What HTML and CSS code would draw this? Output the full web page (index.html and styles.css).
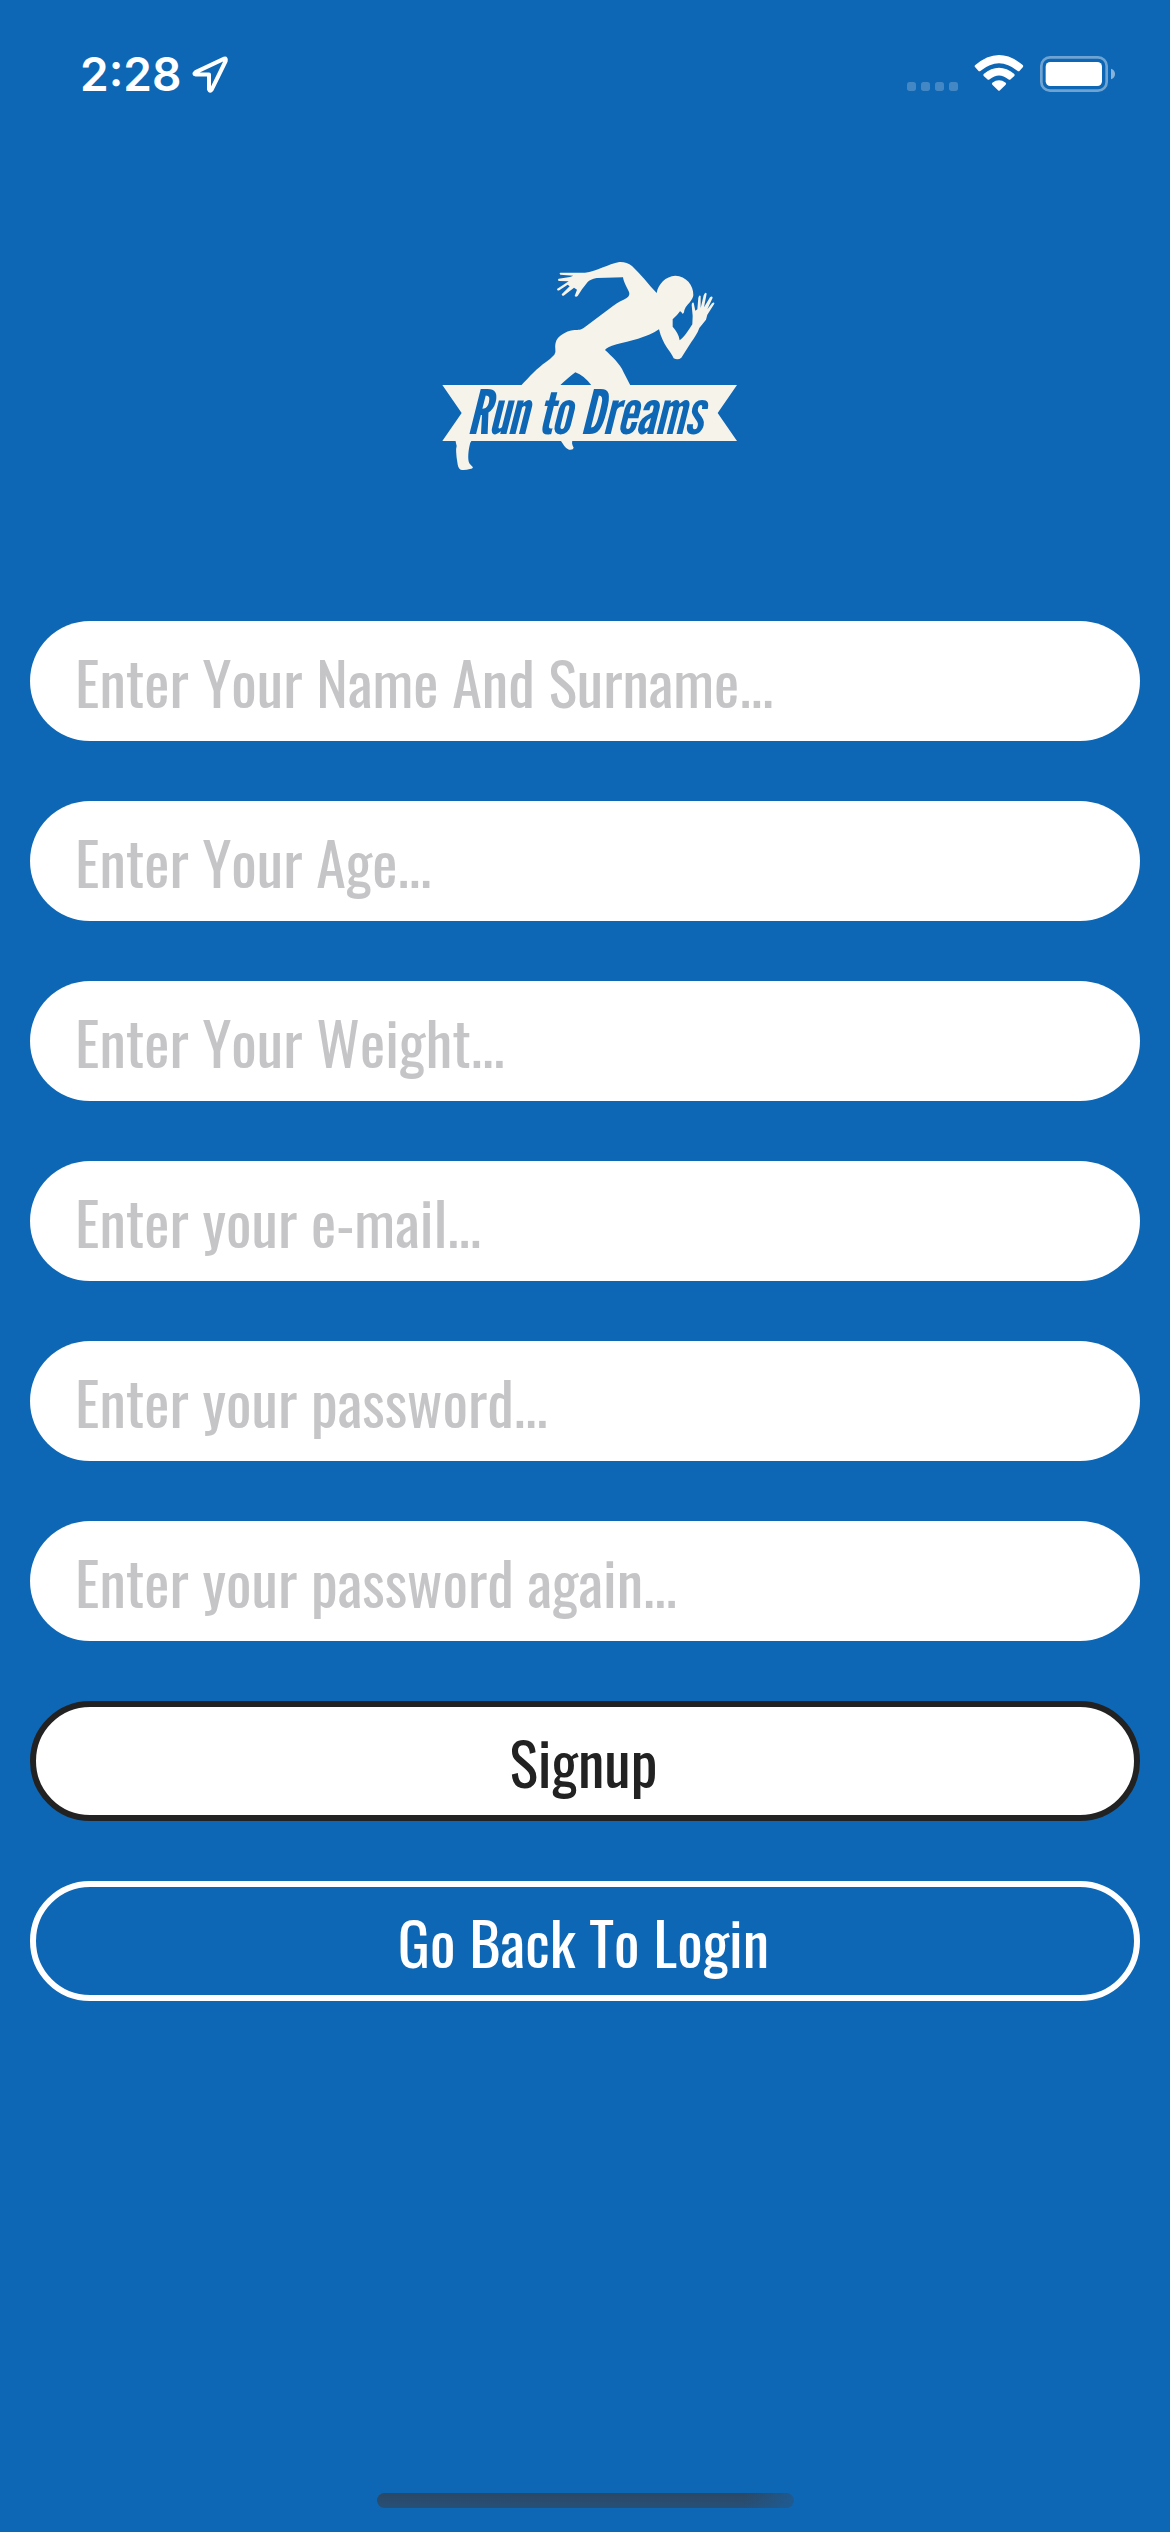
FILE: index.html
```html
<!DOCTYPE html>
<html lang="en">
<head>
<meta charset="utf-8">
<title>Run to Dreams</title>
<link rel="stylesheet" href="styles.css">
</head>
<body>
<header class="status">
  <span class="time">2:28</span>
  <svg class="location" width="40" height="40" viewBox="0 0 120 120"><path d="M103 11 L17 51.500 Q9 57 18 58.500 H57 V103 Q60 111 65 104 L107 18 Q109 9 103 11 Z"/></svg>
  <svg class="signals" width="240" height="70" viewBox="0 0 720 210">
    <g opacity=".22"><rect x="51" y="126" width="27" height="27" rx="8"/><rect x="93" y="126" width="27" height="27" rx="8"/><rect x="135" y="126" width="27" height="27" rx="8"/><rect x="177" y="126" width="27" height="27" rx="8"/></g>
    <path d="M255 76 Q327 14 399 76 Q400 79 399 81 L389 92 Q386 95 382 92 Q327 47 272 92 Q268 95 265 92 L255 81 Q253 79 255 76 Z"/>
    <path d="M281 102 Q327 64 373 102 Q375 105 373 108 L362 118 Q359 121 355 118 Q327 95 299 118 Q295 121 292 118 L281 108 Q279 105 281 102 Z"/>
    <path d="M307 128 Q327 114 347 128 Q350 130 347 134 L330 151 Q327 154 324 151 L307 134 Q304 130 307 128 Z"/>
    <rect x="454" y="52" width="196" height="100" rx="26" fill="none" stroke="#fff" stroke-width="8" opacity=".4"/>
    <rect x="467" y="66" width="169" height="72" rx="14"/>
    <path d="M663 86 Q675 90 675 102 Q675 114 663 118 Z" opacity=".5"/>
  </svg>
</header>
<main>
  <div class="brand">
    <svg class="logo" width="320" height="230" viewBox="0 0 960 690">
      <path d="M272 408 C300 378 322 354 348 336 Q362 326 373 314 Q378 307 376 298 C374 278 380 265 393 256 C405 246 420 241 434 240 C446 239 452 240 462 233 L550 167 C565 156 578 151 590 144 Q601 137 597 126 C590 110 582 100 579 82 L500 84 Q480 88 473 96 L456 118 L443 138 Q438 143 434 138 L441 119 L432 113 L401 137 Q396 139 395 133 L419 109 L413 104 L388 121 Q381 123 381 117 L416 94 L387 93 Q381 90 386 86 L420 81 L430 77 L391 74 Q386 70 391 68 L465 68 C500 64 535 42 568 36 Q590 35 606 48 C632 72 656 104 680 129 C684 103 707 78 736 77 C768 78 791 105 790 136 C788 150 776 160 767 172 Q762 181 762 187 Q759 194 756 190 L754 186 L750 184 L741 195 L728 208 V230 C738 242 747 255 749 271 C762 262 774 243 787 223 L788 198 L785 165 Q785 155 791 158 L796 182 L802 178 L805 143 Q808 133 812 138 L812 174 L821 136 Q826 123 830 131 L822 172 L840 142 Q846 136 848 143 L832 178 L846 160 Q853 154 853 161 L832 194 L828 209 L808 234 C802 251 794 262 784 276 L754 323 Q744 332 731 325 C722 303 698 285 687 238 C650 263 599 273 560 283 Q528 293 525 300 C545 318 571 343 580 365 L602 408 H486 Q462 376 436 367 Q417 381 388 408 Z"/>
      <path d="M37 405 H921 L863 489 L921 573 H37 L95 489 Z"/>
      <path d="M76 570 H126 Q118 580 118 590 C114 610 113 633 119 641 L129 652 Q128 657 120 657 Q105 661 92 659 Q84 657 82 637 Q76 600 80 588 Z"/>
      <path d="M391 570 H428 Q423 580 431 593 Q430 601 417 599 Q409 597 403 588 Z"/>
      <text class="wordmark" x="111" y="551">Run to Dreams</text>
    </svg>
  </div>
  <form class="form">
    <input class="pill" type="text" placeholder="Enter Your Name And Surname...">
    <input class="pill" type="text" placeholder="Enter Your Age...">
    <input class="pill" type="text" placeholder="Enter Your Weight...">
    <input class="pill" type="text" placeholder="Enter your e-mail...">
    <input class="pill" type="text" placeholder="Enter your password...">
    <input class="pill" type="text" placeholder="Enter your password again...">
    <button class="pill signup" type="button">Signup</button>
    <button class="pill login" type="button">Go Back To Login</button>
  </form>
</main>
<footer><div class="home-bar"></div></footer>
</body>
</html>
```
FILE: styles.css
```css
* { box-sizing: border-box; }
body {
  margin: 0;
  width: 1170px;
  height: 2532px;
  display: flex;
  flex-direction: column;
  background: #0e67b5;
  font-family: Oswald, "Roboto Condensed", sans-serif;
  font-kerning: none;
}
.status {
  display: flex;
  align-items: flex-start;
  height: 141px;
  padding: 40px 40px 0 80px;
  color: #fff;
}
.status svg { fill: #fff; }
.time {
  width: 110px;
  font: 600 46px/68px Inter, sans-serif;
}
.status .location {
  margin-top: 15px;
  fill: none;
  stroke: #fff;
  stroke-width: 12;
  stroke-linejoin: round;
}
.signals { margin-left: auto; }
main { flex: 1; }
.brand {
  height: 480px;
  padding: 109px 0 0 430px;
}
.logo {
  display: block;
  fill: #f6f3ea;
}
.wordmark {
  fill: #0e67b5;
  font-family: "League Gothic", Oswald, sans-serif;
  font-size: 184px;
  font-style: italic;
  font-kerning: auto;
  word-spacing: 3px;
}
.form {
  display: flex;
  flex-direction: column;
  gap: 60px;
  padding: 0 30px;
}
.pill {
  width: 100%;
  height: 120px;
  padding: 0 45px 2px;
  border: 0;
  border-radius: 60px;
  background: #fff;
  font-family: inherit;
  font-size: 60px;
  font-weight: 400;
  font-kerning: none;
}
.pill::placeholder {
  color: #c5c5c7;
  opacity: 1;
}
.signup,
.login {
  padding: 0 3px 2px 0;
  border: 6px solid #222;
  color: #222;
}
.login {
  border-color: #fff;
  background: transparent;
  color: #fff;
}
footer {
  display: flex;
  justify-content: center;
  height: 39px;
}
.home-bar {
  width: 417px;
  height: 15px;
  border-radius: 8px;
  background: linear-gradient(100deg, transparent 88%, #1b5f9ccc 100%), linear-gradient(#2c4864, #265078);
}
```
